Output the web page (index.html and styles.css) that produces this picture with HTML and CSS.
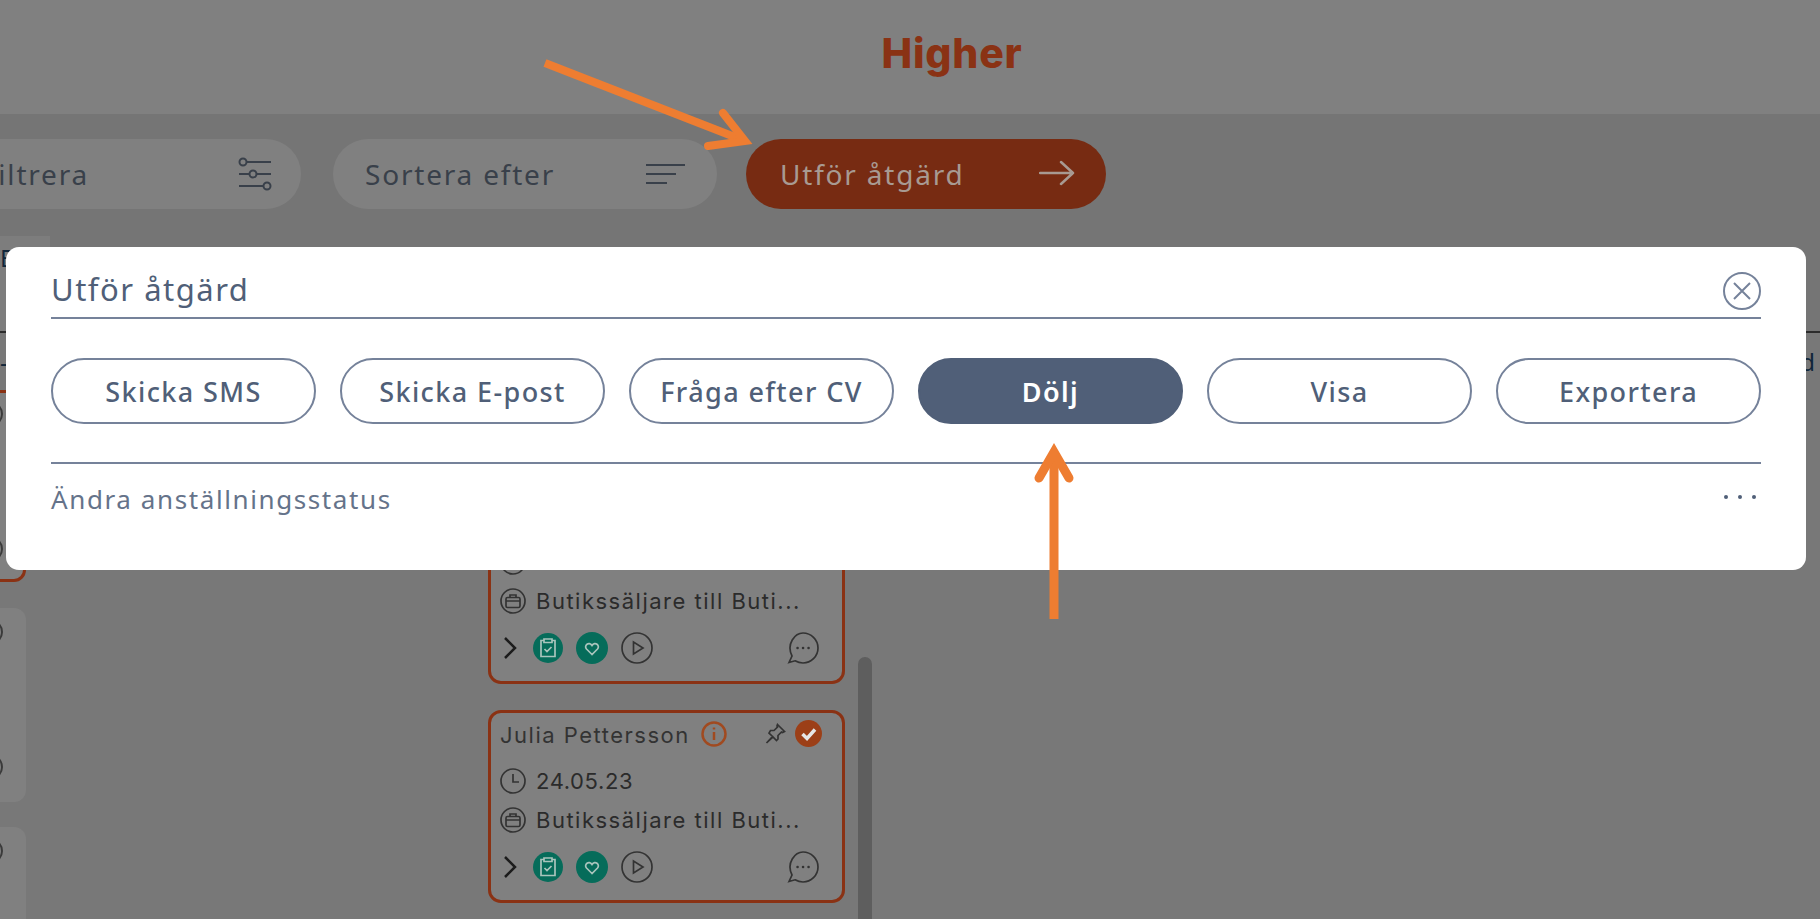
FILE: index.html
```html
<!DOCTYPE html>
<html lang="sv">
<head>
    <meta charset="UTF-8">
    <meta name="viewport" content="width=device-width, initial-scale=1.0">
    <title>Higher</title>
    <link rel="stylesheet" href="styles.css">
</head>
<body>
    <svg class="sprite" width="0" height="0">
        <symbol id="i-clock" viewBox="0 0 26 26"><circle cx="13" cy="13" r="12"/><path d="M13 6v8h6"/></symbol>
        <symbol id="i-case" viewBox="0 0 26 26"><circle cx="13" cy="13" r="12"/><rect x="6" y="9.500" width="14" height="10" rx="1.500"/><path d="M10 9.500V7h6v2.500M6 13h14"/></symbol>
        <symbol id="i-clip" viewBox="0 0 30 30"><circle class="fill-green" cx="15" cy="15" r="15"/><path class="light" d="M10.500 7.500H8v16h14v-16h-2.500M11 6h8v3.500h-8zM11.500 16l2.500 2.500 4.500-4.500"/></symbol>
        <symbol id="i-heart" viewBox="0 0 32 32"><circle class="fill-green" cx="16" cy="16" r="16"/><path class="light" d="M16 22.500l-5.500-5.500c-3-3.500 2.500-8 5.500-3.500 3-4.500 8.500 0 5.500 3.500z"/></symbol>
        <symbol id="i-play" viewBox="0 0 32 32"><circle cx="16" cy="16" r="15"/><path d="M12.500 10v12l9.500-6z"/></symbol>
        <symbol id="i-chat" viewBox="0 0 32 32"><path d="M2 30.500l3-6.500C-1 12 8 1 16 1c8 0 15 6.500 15 15s-7 15-15 15c-3 0-5.500-.800-8-2.200z"/><path class="dots" d="M10.500 16h.100M16 16h.100M21.500 16h.100"/></symbol>
        <symbol id="i-pin" viewBox="0 0 22 22"><path d="M13.500 1.500l7 7-2 1-1-.500-3.500 3.500v3.500l-1.500 1.500-3.500-3.500-6.500 6 6-6.500-3.500-3.500L6.500 7.500H10l3.500-3.500-.500-1z"/></symbol>
    </svg>

    <header class="top-bar">
        <span class="logo">Higher</span>
    </header>

    <div class="toolbar">
        <div class="pill pill-filter">
            <span>Filtrera</span>
            <svg width="34" height="34" viewBox="0 0 34 34" class="tool-icon">
                <path d="M9 5h24M1 17h10M19 17h14M1 29h24"/>
                <circle cx="5" cy="5" r="3.500"/><circle cx="15" cy="17" r="3.500"/><circle cx="29" cy="29" r="3.500"/>
            </svg>
        </div>
        <div class="pill pill-sort">
            <span>Sortera efter</span>
            <svg width="40" height="22" viewBox="0 0 40 22" class="tool-icon">
                <path d="M1 2h39M1 11h30M1 20h21"/>
            </svg>
        </div>
        <div class="pill pill-action">
            <span>Utför åtgärd</span>
            <svg width="36" height="26" viewBox="0 0 36 26" class="arrow-icon">
                <path d="M1 13h33M22 2l12 11-12 11"/>
            </svg>
        </div>
    </div>

    <div class="tabs"><span class="tab">E</span></div>

    <div class="col-heads">
        <span>-</span>
        <span>Avböjd</span>
    </div>

    <main class="board">
        <div class="col-left">
            <div class="card-stub card-stub-active"><i></i><i></i></div>
            <div class="card-stub"><i></i><i></i></div>
            <div class="card-stub"><i></i><i></i></div>
        </div>
        <div class="col-main">
            <article class="card">
                <div class="card-name">
                    <span>Julia Pettersson</span>
                    <svg class="info" width="26" height="26" viewBox="0 0 26 26"><circle cx="13" cy="13" r="11.500"/><path d="M13 11v8M13 6.500v2"/></svg>
                    <svg class="icon pin" width="22" height="22"><use href="#i-pin"/></svg>
                    <svg class="check" width="27" height="27" viewBox="0 0 27 27"><circle cx="13.500" cy="13.500" r="13.500"/><path d="M7.500 14l4.500 4.500 8-9"/></svg>
                </div>
                <div class="card-row"><svg class="icon" width="26" height="26"><use href="#i-clock"/></svg><span class="card-date">24.05.23</span></div>
                <div class="card-row"><svg class="icon" width="26" height="26"><use href="#i-case"/></svg><span>Butikssäljare till Buti...</span></div>
                <div class="card-actions">
                    <svg class="chevron" width="14" height="24" viewBox="0 0 14 24"><path d="M2 2l10 10-10 10"/></svg>
                    <svg class="icon" width="30" height="30"><use href="#i-clip"/></svg>
                    <svg class="icon" width="32" height="32"><use href="#i-heart"/></svg>
                    <svg class="icon" width="32" height="32"><use href="#i-play"/></svg>
                    <svg class="icon chat" width="32" height="32"><use href="#i-chat"/></svg>
                </div>
            </article>
            <article class="card">
                <div class="card-name">
                    <span>Julia Pettersson</span>
                    <svg class="info" width="26" height="26" viewBox="0 0 26 26"><circle cx="13" cy="13" r="11.500"/><path d="M13 11v8M13 6.500v2"/></svg>
                    <svg class="icon pin" width="22" height="22"><use href="#i-pin"/></svg>
                    <svg class="check" width="27" height="27" viewBox="0 0 27 27"><circle cx="13.500" cy="13.500" r="13.500"/><path d="M7.500 14l4.500 4.500 8-9"/></svg>
                </div>
                <div class="card-row"><svg class="icon" width="26" height="26"><use href="#i-clock"/></svg><span class="card-date">24.05.23</span></div>
                <div class="card-row"><svg class="icon" width="26" height="26"><use href="#i-case"/></svg><span>Butikssäljare till Buti...</span></div>
                <div class="card-actions">
                    <svg class="chevron" width="14" height="24" viewBox="0 0 14 24"><path d="M2 2l10 10-10 10"/></svg>
                    <svg class="icon" width="30" height="30"><use href="#i-clip"/></svg>
                    <svg class="icon" width="32" height="32"><use href="#i-heart"/></svg>
                    <svg class="icon" width="32" height="32"><use href="#i-play"/></svg>
                    <svg class="icon chat" width="32" height="32"><use href="#i-chat"/></svg>
                </div>
            </article>
        </div>
        <div class="scroll-thumb"></div>
    </main>

    <section class="modal">
        <div class="modal-head">
            <h2>Utför åtgärd</h2>
            <svg class="close" width="38" height="38" viewBox="0 0 38 38"><circle cx="19" cy="19" r="18"/><path d="M11 11l16 16M27 11L11 27"/></svg>
        </div>
        <div class="modal-actions">
            <button>Skicka SMS</button>
            <button>Skicka E-post</button>
            <button>Fråga efter CV</button>
            <button class="selected">Dölj</button>
            <button>Visa</button>
            <button>Exportera</button>
        </div>
        <div class="modal-status">
            <span>Ändra anställningsstatus</span>
            <span class="more"><i></i><i></i><i></i></span>
        </div>
    </section>

    <!-- annotation arrows on the screenshot -->
    <svg class="callouts" width="1820" height="919" viewBox="0 0 1820 919">
        <path d="M545 63L745 141" />
        <path class="head" d="M723 113L745 141L708 146" />
        <path class="up" d="M1054 619V452" />
        <path class="up head" d="M1039 478L1054 452L1069 478" />
    </svg>
</body>
</html>
```

FILE: styles.css
```css
:root {
    --header: #808080;
    --toolbar: #757575;
    --board: #787878;
    --surface: #808080;
    --brand: #8a3214;
    --brand-dark: #772b12;
    --slate: #505f78;
    --line: #75829a;
    --ink: #2b2b2b;
    --ink-soft: #39404a;
    --green: #066c5a;
    --callout: #ee7d31;
}

* {
    margin: 0;
    padding: 0;
    box-sizing: border-box;
}

html, body {
    height: 919px;
    overflow: hidden;
}

body {
    font-family: 'Noto Sans', Arial, sans-serif;
    background-color: var(--board);
    color: var(--ink);
    position: relative;
}

.sprite {
    position: absolute;
}

.top-bar {
    height: 114px;
    background-color: var(--header);
    display: flex;
    align-items: center;
    justify-content: center;
    padding: 0 0 8px 84px;
}

.logo {
    font-family: 'Inter', Arial, sans-serif;
    font-size: 41px;
    font-weight: 800;
    letter-spacing: 0.8px;
    color: var(--brand);
}

.toolbar {
    height: 122px;
    background-color: var(--toolbar);
    padding: 25px 0 0;
    display: flex;
    gap: 32px;
    align-items: flex-start;
}

.pill {
    height: 70px;
    border-radius: 35px;
    background-color: var(--surface);
    color: var(--ink-soft);
    display: flex;
    align-items: center;
    justify-content: space-between;
    font-size: 28px;
    letter-spacing: 1.8px;
    flex-shrink: 0;
}

.pill-filter {
    margin-left: -40px;
    width: 341px;
    padding: 0 29px 0 22px;
}

.pill-sort {
    width: 384px;
    padding: 0 32px;
}

.pill-action {
    width: 360px;
    margin-left: -3px;
    background-color: var(--brand-dark);
    color: #a89a92;
    padding: 0 31px 0 34px;
}

.tool-icon {
    fill: none;
    stroke: var(--ink-soft);
    stroke-width: 2;
}

.arrow-icon {
    margin-top: -2px;
    fill: none;
    stroke: #a89a92;
    stroke-width: 2.500;
    stroke-linecap: round;
    stroke-linejoin: round;
}

.tabs {
    height: 97px;
    background-color: var(--toolbar);
    border-bottom: 2px solid #2c2c2c;
}

.tab {
    display: block;
    width: 50px;
    height: 95px;
    background-color: #7d7d7d;
    font-size: 24px;
    padding: 5px 0 0 0;
    color: #10263a;
}

.col-heads {
    height: 57px;
    display: flex;
    justify-content: space-between;
    padding: 12px 5px 0 0;
    font-size: 24px;
    color: #10263a;
}

.board {
    display: flex;
    align-items: flex-start;
    height: 500px;
}

.col-left {
    width: 340px;
    margin-left: -314px;
    display: flex;
    flex-direction: column;
    gap: 25px;
    flex-shrink: 0;
}

.card-stub {
    height: 194px;
    padding: 11px 0 0 291px;
    border-radius: 12px;
    background-color: #808080;
}

.card-stub i {
    display: block;
    width: 26px;
    height: 26px;
    margin-bottom: 109px;
    border: 2px solid #3a3a3a;
    border-radius: 50%;
}

.card-stub-active {
    height: 192px;
    border: 3px solid var(--brand);
    padding: 8px 0 0 288px;
}

.col-left .card-stub-active + .card-stub {
    margin-top: 1px;
}

.col-main {
    width: 357px;
    margin-left: 462px;
    padding-top: 101px;
    display: flex;
    flex-direction: column;
    gap: 26px;
    flex-shrink: 0;
}

.card {
    height: 193px;
    padding: 7px 20px 0 9px;
    border: 3px solid var(--brand);
    border-radius: 13px;
    background-color: var(--surface);
    font-family: 'Inter', Arial, sans-serif;
    font-size: 22px;
    letter-spacing: 1.5px;
}

.card-name {
    height: 30px;
    display: flex;
    align-items: center;
    color: #333;
}

.info {
    margin-left: 11px;
    margin-top: -3px;
    fill: none;
    stroke: #a04a20;
    stroke-width: 2.500;
}

.pin {
    margin-left: auto;
    margin-top: -2px;
}

.check {
    margin-left: 9px;
    margin-top: -3px;
    fill: #9c3f17;
}

.check path {
    fill: none;
    stroke: #e6e6e6;
    stroke-width: 3.500;
}

.card-row {
    display: flex;
    align-items: center;
    gap: 10px;
    height: 39px;
}

.card-name + .card-row {
    margin-top: 11px;
}

.card-date {
    letter-spacing: 0.6px;
}

.icon {
    fill: none;
    stroke: #333;
    stroke-width: 1.700;
    flex-shrink: 0;
}

.fill-green {
    fill: var(--green);
    stroke: none;
}

.light {
    stroke: #a9c4bc;
}

.dots {
    stroke-width: 2.500;
    stroke-linecap: round;
}

.card-actions {
    display: flex;
    align-items: center;
    margin-top: 11px;
    gap: 13px;
    height: 34px;
}

.chevron {
    fill: none;
    stroke: #1c1c1c;
    stroke-width: 2.500;
    margin: 0 3px 0 3px;
}

.chat {
    margin-left: auto;
    margin-right: 3px;
}

.scroll-thumb {
    width: 14px;
    height: 400px;
    margin: 267px 0 0 13px;
    border-radius: 7px;
    background-color: #5e5e5e;
    flex-shrink: 0;
}

.modal {
    position: absolute;
    left: 6px;
    top: 247px;
    width: 1800px;
    height: 323px;
    padding: 0 45px;
    border-radius: 13px;
    background-color: #fff;
    color: var(--slate);
}

.modal-head {
    height: 72px;
    border-bottom: 2px solid var(--line);
    display: flex;
    align-items: center;
    justify-content: space-between;
    padding: 14px 0 0 0;
}

.modal-head h2 {
    font-size: 31px;
    font-weight: 400;
    letter-spacing: 1.5px;
}

.close {
    fill: none;
    stroke: var(--line);
    stroke-width: 2;
    margin-top: 3px;
}

.modal-actions {
    display: grid;
    grid-template-columns: repeat(6, 1fr);
    gap: 24px;
    margin-top: 39px;
    padding-bottom: 38px;
    border-bottom: 2px solid var(--line);
}

.modal-actions button {
    height: 66px;
    border: 2px solid var(--line);
    border-radius: 33px;
    background-color: #fff;
    color: var(--slate);
    font-family: 'Noto Sans', Arial, sans-serif;
    font-size: 27px;
    font-weight: 500;
    letter-spacing: 1.4px;
}

.modal-actions button.selected {
    background-color: var(--slate);
    border-color: var(--slate);
    color: #fff;
    font-weight: 600;
}

.modal-status {
    display: flex;
    justify-content: space-between;
    padding-top: 17px;
    font-size: 26px;
    letter-spacing: 1.6px;
    color: #65738a;
}

.more {
    display: flex;
    gap: 10px;
    padding: 14px 5px 0 0;
}

.more i {
    width: 4px;
    height: 4px;
    border-radius: 50%;
    background-color: var(--slate);
}

.callouts {
    position: absolute;
    left: 0;
    top: 0;
    fill: none;
    stroke: var(--callout);
    stroke-width: 8;
}

.callouts .up {
    stroke-width: 9;
}

.callouts .head {
    stroke-linecap: round;
}
```
